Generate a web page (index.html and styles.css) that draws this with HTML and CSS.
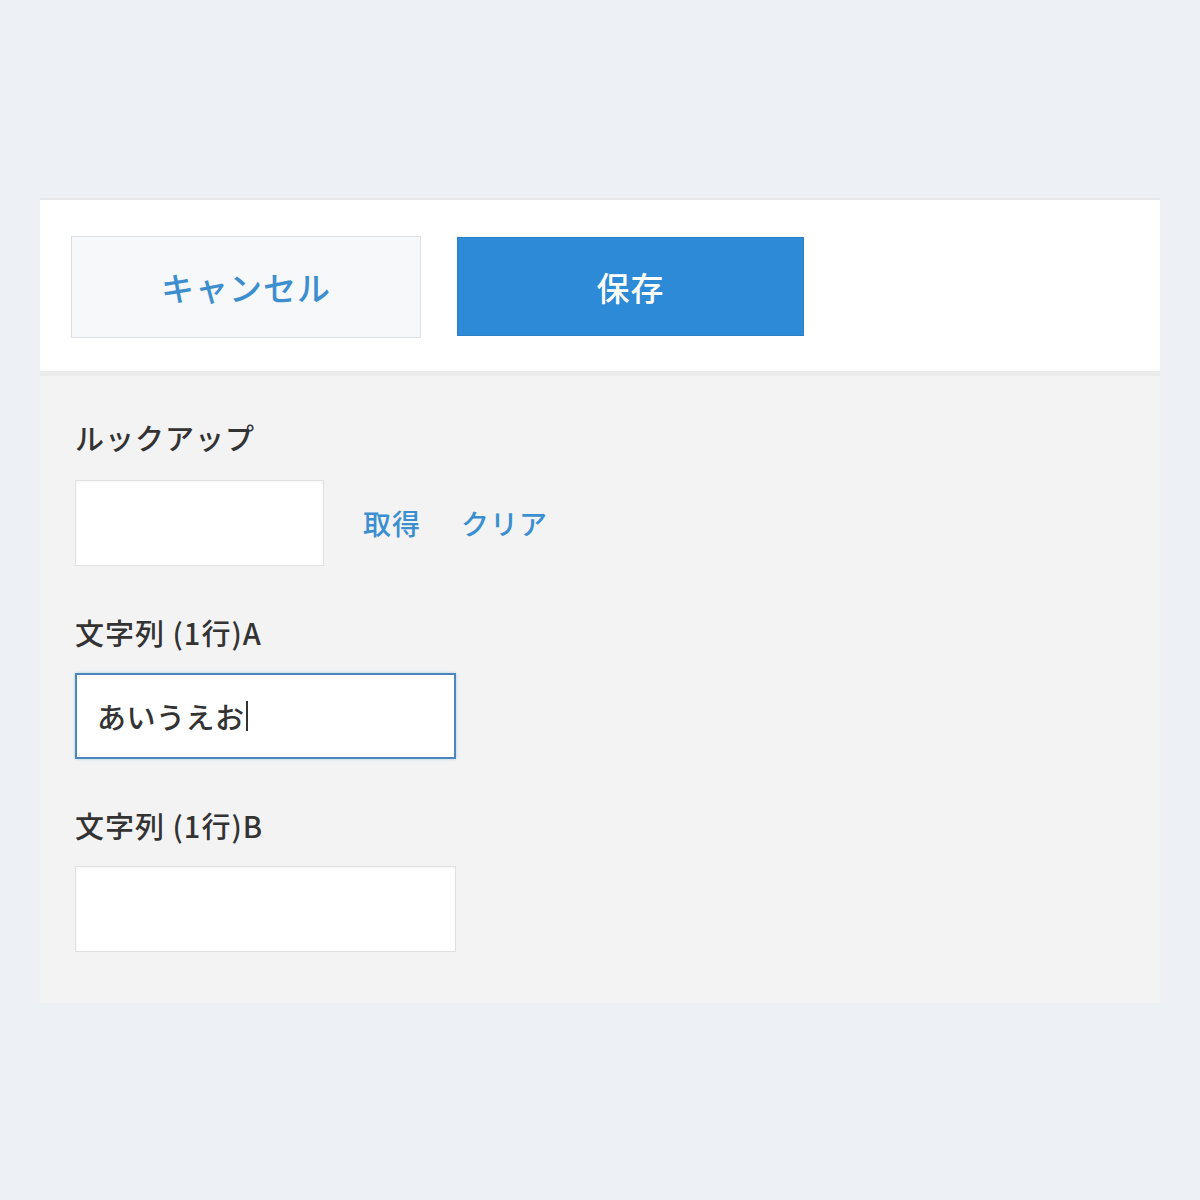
FILE: index.html
```html
<!DOCTYPE html>
<html lang="ja">
<head>
<meta charset="utf-8">
<title>Form</title>
<link rel="stylesheet" href="styles.css">
</head>
<body>
<div class="panel">
  <div class="toolbar">
    <button class="btn btn-cancel">キャンセル</button>
    <button class="btn btn-save">保存</button>
  </div>
  <div class="form">
    <div class="field">
      <div class="label">ルックアップ</div>
      <div class="lookup-row">
        <div class="input input-lookup"></div>
        <a class="link link-get">取得</a>
        <a class="link">クリア</a>
      </div>
    </div>
    <div class="field">
      <div class="label">文字列 (1行)A</div>
      <div class="input input-text focused"><span class="value">あいうえお</span><span class="caret"></span></div>
    </div>
    <div class="field">
      <div class="label">文字列 (1行)B</div>
      <div class="input input-text"></div>
    </div>
  </div>
</div>
</body>
</html>
```
FILE: styles.css
```css
html, body {
  margin: 0;
  padding: 0;
  background: #edf0f5;
  font-family: "Noto Sans CJK JP", "Noto Sans", sans-serif;
}

.panel {
  margin: 198px 0 0 40px;
  width: 1120px;
  border-top: 2px solid #e9e9ec;
}

.toolbar {
  background: #ffffff;
  display: flex;
  align-items: flex-start;
  gap: 36px;
  padding: 36px 0 0 31px;
  height: 135px;
  border-bottom: 5px solid #ececec;
}

.btn {
  font-family: inherit;
  font-size: 33px;
  font-weight: 500;
  cursor: pointer;
  display: flex;
  align-items: center;
  justify-content: center;
  padding: 0;
  letter-spacing: 1px;
}

.btn-cancel {
  width: 350px;
  height: 102px;
  background: #f6f8fa;
  color: #3d8ece;
  border: 1px solid #dcdfe3;
}

.btn-save {
  width: 347px;
  height: 99px;
  margin-top: 1px;
  background: #2d8ad6;
  color: #ffffff;
  border: 1px solid #2b7fc6;
}

.form {
  background: #f3f3f3;
  padding: 43px 0 51px 35px;
}

.field + .field {
  margin-top: 48px;
}

.label {
  font-size: 29px;
  font-weight: 500;
  line-height: 36px;
  color: #333333;
  letter-spacing: 1px;
}

.lookup-row {
  display: flex;
  align-items: center;
  margin-top: 25px;
}

.input {
  background: #ffffff;
  border: 1px solid #e0e0e0;
  box-shadow: inset 0 2px 3px rgba(0, 0, 0, 0.04);
  box-sizing: border-box;
  height: 86px;
}

.input-lookup {
  width: 249px;
}

.input-text {
  width: 381px;
  margin-top: 23px;
  display: flex;
  align-items: center;
  padding-left: 20px;
}

.input-text.focused {
  border: 2px solid #4a86c0;
  box-shadow: 0 0 3px rgba(74, 134, 192, 0.35);
}

.value {
  font-size: 29px;
  font-weight: 500;
  color: #333333;
  letter-spacing: 0.5px;
}

.caret {
  display: inline-block;
  width: 2px;
  height: 30px;
  background: #333333;
  margin-left: 1px;
}

.link {
  font-size: 28px;
  font-weight: 500;
  color: #3b8fd0;
  letter-spacing: 1px;
  margin-left: 40px;
}

.link-get {
  margin-left: 39px;
}
```
